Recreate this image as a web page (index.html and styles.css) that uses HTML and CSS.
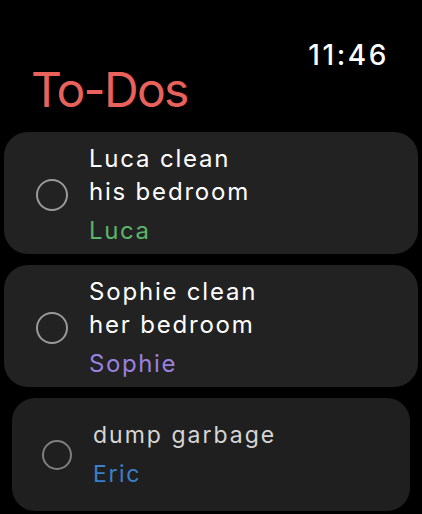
FILE: index.html
```html
<!DOCTYPE html>
<html>
<head>
<meta charset="utf-8">
<link rel="stylesheet" href="styles.css">
</head>
<body>
<div class="screen">
  <header class="header">
    <div class="time">11:46</div>
    <h1 class="title">To-Dos</h1>
  </header>
  <ul class="list">
    <li class="card">
      <span class="check"></span>
      <div class="body">
        <div class="task">Luca clean<br>his bedroom</div>
        <div class="who luca">Luca</div>
      </div>
    </li>
    <li class="card">
      <span class="check"></span>
      <div class="body">
        <div class="task">Sophie clean<br>her bedroom</div>
        <div class="who sophie">Sophie</div>
      </div>
    </li>
    <li class="card card-far">
      <span class="check"></span>
      <div class="body">
        <div class="task">dump garbage</div>
        <div class="who eric">Eric</div>
      </div>
    </li>
  </ul>
</div>
</body>
</html>
```
FILE: styles.css
```css
html, body {
  margin: 0;
  padding: 0;
  background: #000;
}
body {
  font-family: Inter, "Noto Sans", sans-serif;
  color: #fff;
  width: 422px;
  height: 514px;
  overflow: hidden;
}
.screen {
  display: flex;
  flex-direction: column;
}
.header {
  display: flex;
  flex-direction: column;
  padding: 0 33px 0 31px;
}
.time {
  margin-top: 42px;
  align-self: flex-end;
  font-size: 28px;
  line-height: 26px;
  font-weight: 500;
  letter-spacing: 2.6px;
}
.title {
  margin: -2px 0 0 0;
  font-size: 48px;
  line-height: 48px;
  font-weight: 400;
  letter-spacing: -1.7px;
  color: #e9615b;
}
.list {
  list-style: none;
  margin: 18px 0 0 0;
  padding: 0 4px;
  display: flex;
  flex-direction: column;
  gap: 11px;
}
.card {
  display: flex;
  align-items: center;
  gap: 21px;
  background: #222222;
  border-radius: 24px;
  padding: 10px 16px 7px 32px;
  min-height: 105px;
}
.check {
  flex: none;
  width: 28px;
  height: 28px;
  border: 2px solid #9a9a9a;
  border-radius: 50%;
}
.task {
  font-size: 24px;
  line-height: 33px;
  letter-spacing: 1.8px;
}
.who {
  margin-top: 6px;
  font-size: 24px;
  line-height: 33px;
  letter-spacing: 1.6px;
}
.luca { color: #5bb36a; }
.sophie { color: #9a80df; }
.eric { color: #3a7fca; }
.card-far {
  margin: 0 8px;
  padding: 0 16px 0 30px;
  min-height: 113px;
  border-radius: 23px;
  background: #1f1f1f;
}
.card-far .check {
  width: 26px;
  height: 26px;
  border-color: #7f7f7f;
}
.card-far .task {
  color: #d6d6d6;
  font-size: 23px;
  letter-spacing: 2px;
}
.card-far .who {
  font-size: 23px;
  letter-spacing: 1.6px;
}
```
